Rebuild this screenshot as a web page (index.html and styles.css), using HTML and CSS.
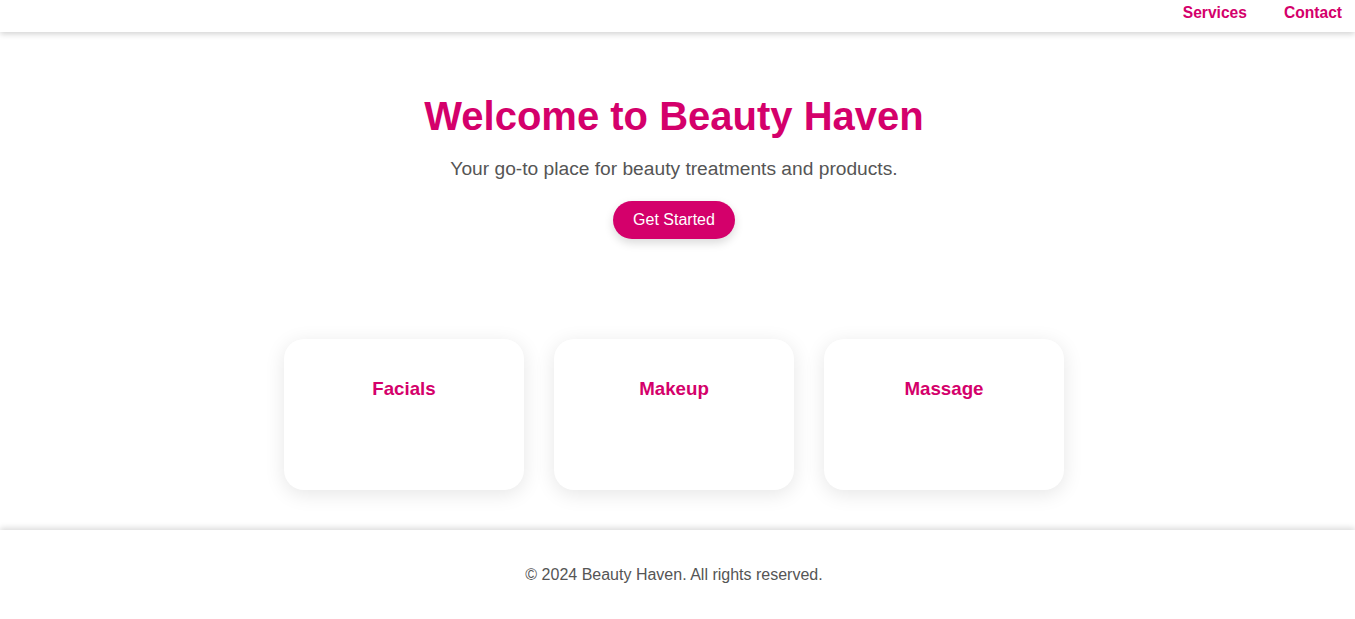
FILE: index.html
```html
<!DOCTYPE html>
<html lang="en">
<head>
<meta charset="utf-8">
<title>Beauty Haven</title>
<link rel="stylesheet" href="styles.css">
</head>
<body>
<header class="site-header">
  <nav class="nav">
    <a class="nav-link" href="#services">Services</a>
    <a class="nav-link" href="#contact">Contact</a>
  </nav>
</header>
<main class="main">
  <section class="hero">
    <h1 class="hero-title">Welcome to Beauty Haven</h1>
    <p class="hero-sub">Your go-to place for beauty treatments and products.</p>
    <a class="btn" href="#services">Get Started</a>
  </section>
  <section class="services" id="services">
    <div class="card"><h3 class="card-title">Facials</h3></div>
    <div class="card"><h3 class="card-title">Makeup</h3></div>
    <div class="card"><h3 class="card-title">Massage</h3></div>
  </section>
</main>
<footer class="site-footer" id="contact">
  <p class="footer-text">&copy; 2024 Beauty Haven. All rights reserved.</p>
</footer>
</body>
</html>
```
FILE: styles.css
```css
* { box-sizing: border-box; }
html, body { margin: 0; padding: 0; }
body {
  font-family: "Liberation Sans", Arial, sans-serif;
  background: #ffffff;
  color: #555555;
}
.site-header {
  height: 32px;
  background: #ffffff;
  box-shadow: 0 2px 6px rgba(0, 0, 0, 0.18);
  display: flex;
  justify-content: flex-end;
  align-items: flex-start;
  padding: 4px 13px 0 0;
  position: relative;
  z-index: 1;
}
.nav { display: flex; gap: 37px; }
.nav-link {
  color: #d4006b;
  font-weight: bold;
  font-size: 15.6px;
  text-decoration: none;
}
.main { padding-right: 7px; }
.hero {
  display: flex;
  flex-direction: column;
  align-items: center;
  padding-top: 61px;
}
.hero-title {
  margin: 0;
  font-size: 40px;
  line-height: 46px;
  color: #d4006b;
}
.hero-sub {
  margin: 19px 0 0;
  font-size: 19.2px;
  line-height: 22px;
}
.btn {
  margin-top: 21px;
  display: inline-flex;
  align-items: center;
  justify-content: center;
  width: 122px;
  height: 38px;
  border-radius: 20px;
  background: #d4006b;
  color: #ffffff;
  font-size: 16px;
  text-decoration: none;
  box-shadow: 0 4px 10px rgba(0, 0, 0, 0.15);
}
.services {
  display: flex;
  justify-content: center;
  gap: 30px;
  margin-top: 100px;
}
.card {
  width: 240px;
  height: 151px;
  background: #ffffff;
  border-radius: 20px;
  box-shadow: 0 4px 20px rgba(0, 0, 0, 0.1);
  text-align: center;
  padding-top: 39px;
}
.card-title {
  margin: 0;
  font-size: 18.72px;
  line-height: 22px;
  color: #d4006b;
}
.site-footer {
  margin-top: 40px;
  height: 90px;
  background: #ffffff;
  box-shadow: 0 -2px 6px rgba(0, 0, 0, 0.15);
  text-align: center;
  padding: 36px 7px 0 0;
}
.footer-text {
  margin: 0;
  font-size: 16px;
  line-height: 18px;
  color: #555555;
}
```
